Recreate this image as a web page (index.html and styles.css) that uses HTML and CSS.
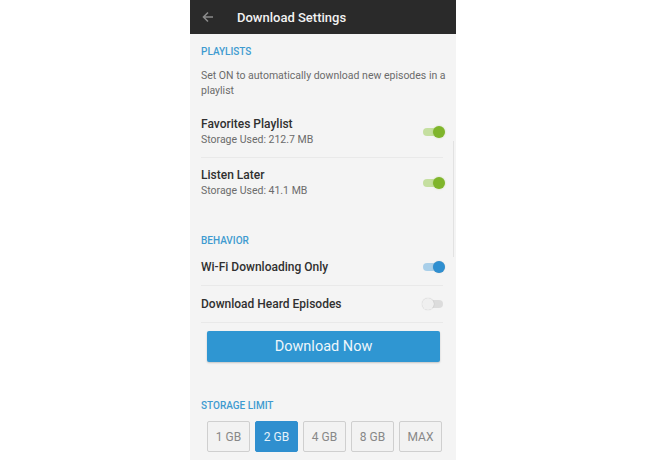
FILE: index.html
```html
<!DOCTYPE html>
<html>
<head>
  <link rel="stylesheet" href="styles.css">
</head>
<body>
  <div class="screen">
    <div class="toolbar">
      <svg class="back" width="14" height="14" viewBox="0 0 14 14">
        <path d="M12 7H2.5M7 2.5L2.5 7L7 11.5" fill="none" stroke="#8a8a8a" stroke-width="1.6"/>
      </svg>
      <span class="title">Download Settings</span>
    </div>

    <div class="content">
      <div class="scrollbar"></div>

      <div class="section-title first">PLAYLISTS</div>
      <p class="desc">Set ON to automatically download new episodes in a playlist</p>

      <div class="row divided">
        <div class="row-text">
          <div class="row-name">Favorites Playlist</div>
          <div class="row-sub">Storage Used: 212.7 MB</div>
        </div>
        <span class="toggle on green"></span>
      </div>
      <div class="row">
        <div class="row-text">
          <div class="row-name">Listen Later</div>
          <div class="row-sub">Storage Used: 41.1 MB</div>
        </div>
        <span class="toggle on green"></span>
      </div>

      <div class="section-title behavior">BEHAVIOR</div>
      <div class="row single divided">
        <div class="row-name">Wi-Fi Downloading Only</div>
        <span class="toggle on blue"></span>
      </div>
      <div class="row single divided">
        <div class="row-name">Download Heard Episodes</div>
        <span class="toggle"></span>
      </div>

      <button class="download">Download Now</button>

      <div class="section-title storage">STORAGE LIMIT</div>
      <div class="limits">
        <span class="limit">1 GB</span>
        <span class="limit active">2 GB</span>
        <span class="limit">4 GB</span>
        <span class="limit">8 GB</span>
        <span class="limit">MAX</span>
      </div>
    </div>
  </div>
</body>
</html>
```

FILE: styles.css
```css
body {
  margin: 0;
  background: #fff;
  font-family: Roboto, "Liberation Sans", sans-serif;
}

.screen {
  width: 266px;
  height: 460px;
  margin-left: 190px;
  background: #f4f4f4;
  overflow: hidden;
}

.toolbar {
  height: 34px;
  background: #2a2a2a;
  display: flex;
  align-items: center;
  padding-left: 11px;
}

.back {
  margin-right: 22px;
}

.title {
  color: #f2f2f2;
  font-size: 13px;
  font-weight: 500;
}

.content {
  position: relative;
  padding: 0 13px 0 11px;
}

.scrollbar {
  position: absolute;
  right: 2px;
  top: 96px;
  width: 1px;
  height: 116px;
  background: #e2e2e2;
}

.section-title {
  color: #3e9bd0;
  font-size: 10px;
  font-weight: 500;
  line-height: 14px;
  margin-top: 26px;
}

.section-title.first {
  margin-top: 11px;
}

.section-title.behavior {
  margin-bottom: 1px;
}

.section-title.storage {
  margin-top: 37px;
}

.desc {
  margin: 9px -6px 9px 0;
  font-size: 10.5px;
  line-height: 15px;
  color: #6b6b6b;
}

.row {
  display: flex;
  align-items: center;
  justify-content: space-between;
  padding: 9px 0 10px;
}

.row.divided {
  border-bottom: 1px solid #e9e9e9;
}

.row.single {
  padding: 10px 0 10px;
}

.row-name {
  font-size: 12px;
  font-weight: 500;
  line-height: 16px;
  color: #303030;
}

.row-sub {
  font-size: 10.5px;
  line-height: 15px;
  color: #6b6b6b;
}

.toggle {
  position: relative;
  width: 20px;
  height: 8px;
  border-radius: 4px;
  background: #dcdcdc;
}

.toggle::after {
  content: "";
  position: absolute;
  top: -2px;
  left: -1px;
  width: 12px;
  height: 12px;
  border-radius: 50%;
  background: #efefef;
  box-shadow: 0 0 1px rgba(0, 0, 0, 0.25);
}

.toggle.on::after {
  left: auto;
  right: -2px;
}

.toggle.green {
  background: #c5dfa0;
}

.toggle.green::after {
  background: #7fb52b;
  box-shadow: 0 0 2px rgba(127, 181, 43, 0.4);
}

.toggle.blue {
  background: #a9cfe9;
}

.toggle.blue::after {
  background: #2f8fd0;
}

.download {
  display: block;
  width: 233px;
  height: 31px;
  margin: 8px 0 0 6px;
  border: none;
  border-radius: 2px;
  background: #2f96d2;
  color: #eef6fb;
  font-family: inherit;
  font-size: 14.5px;
  box-shadow: 0 1px 2px rgba(0, 0, 0, 0.2);
}

.limits {
  display: flex;
  gap: 5px;
  margin: 8px 0 0 6px;
}

.limit {
  width: 41px;
  height: 29px;
  border: 1px solid #cfcfcf;
  border-radius: 2px;
  display: flex;
  align-items: center;
  justify-content: center;
  font-size: 12px;
  color: #888;
  background: #f2f2f2;
}

.limit.active {
  background: #2f8fcf;
  border-color: #2f8fcf;
  color: #e6f2fa;
}
```
